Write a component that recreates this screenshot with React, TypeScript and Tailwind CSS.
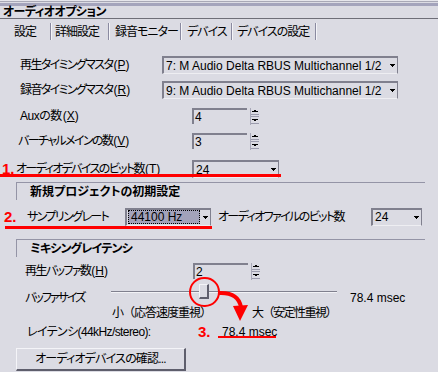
import React from "react";

const DARK = "border-[#80808e]";
const TIGHT = "tracking-[-1.6px]";

function DropArrow() {
  return (
    <svg width="5" height="3" viewBox="0 0 5 3" className="shrink-0">
      <rect x="0" y="0" width="5" height="1" fill="#000" />
      <rect x="1" y="1" width="3" height="1" fill="#000" />
      <rect x="2" y="2" width="1" height="1" fill="#000" />
    </svg>
  );
}

function Spin() {
  return (
    <svg width="10" height="17" viewBox="0 0 10 17" className="shrink-0">
      <rect x="0" y="0" width="1" height="17" fill="#a8a8b8" />
      <rect x="4" y="2" width="2" height="1" fill="#000" />
      <rect x="2" y="3" width="6" height="1" fill="#000" />
      <rect x="1" y="6" width="8" height="1" fill="#9c9cae" />
      <rect x="1" y="8" width="8" height="1" fill="#9c9cae" />
      <rect x="2" y="11" width="6" height="1" fill="#000" />
      <rect x="4" y="12" width="2" height="1" fill="#000" />
      <rect x="1" y="15" width="8" height="1" fill="#9c9cae" />
    </svg>
  );
}

// accelerator key like (P) with the letter underlined
function Key({ k }: { k: string }) {
  return (
    <span className="ml-[1px] tracking-normal">
      (<u>{k}</u>)
    </span>
  );
}

function Select({ w, value, selected }: { w: number; value: string; selected?: boolean }) {
  return (
    <div
      className={`flex h-[18px] shrink-0 items-center border-t-2 border-l-2 border-r ${DARK} border-b border-b-[#eeeef2]`}
      style={{ width: w }}
    >
      {selected ? (
        <div className="ml-[1px] flex h-[14px] flex-1 items-center border border-dotted border-black bg-[#a2a2ba] pl-[2px] text-[12px] leading-[14px]">
          {value}
        </div>
      ) : (
        <div className="flex-1 whitespace-nowrap pl-[2px] text-[12px] leading-[14px]">{value}</div>
      )}
      <div className="flex w-[10px] justify-center">
        <DropArrow />
      </div>
    </div>
  );
}

function NumInput({ value }: { value: string }) {
  return (
    <div className="flex items-center">
      <div className={`h-[16px] w-[55px] border-t-2 border-l-2 ${DARK} pl-[1px] text-[12px] leading-[14px]`}>
        {value}
      </div>
      <div className="ml-[3px]">
        <Spin />
      </div>
    </div>
  );
}

function GroupHeader({ title, tracking }: { title: string; tracking: string }) {
  return (
    <div
      className={`ml-[16px] flex h-[18px] w-[409px] items-center border-t border-l border-[#9494a6] pl-[13px] text-[12px] font-bold leading-[14px] ${tracking}`}
    >
      {title}
    </div>
  );
}

function Tab({ w, pl, label }: { w: number; pl: number; label: string }) {
  return (
    <>
      <span className="shrink-0 whitespace-nowrap tracking-[-1px]" style={{ width: w, paddingLeft: pl }}>
        {label}
      </span>
      <span className="h-[17px] w-[2px] shrink-0 border-l border-r border-l-[#8a8aa0] border-r-[#f4f4f8]" />
    </>
  );
}

export default function App() {
  const red =
    "text-[#ff0000] font-bold text-[15px] leading-[14px] tracking-normal font-['Liberation_Sans',sans-serif]";

  return (
    <div className="relative h-[372px] w-[438px] overflow-hidden whitespace-nowrap bg-[#dbdbe3] text-black font-['Liberation_Sans','Noto_Sans_CJK_JP',sans-serif] [font-feature-settings:'palt']">
      {/* window chrome */}
      <div className="h-[1px] bg-[#e6e6ec]" />
      <div className="h-[1px] bg-[#a8a8b6]" />
      <div className="h-[1px] bg-[#dcdce4]" />
      <div className="h-[3px] bg-[#a4a4bc]" />
      <div className="h-[13px] border-b border-[#6e6e78] pl-[3px] text-[12px] font-bold leading-[12px] tracking-[-0.6px]">
        オーディオオプション
      </div>

      {/* tabs */}
      <div className="flex h-[25px] items-center text-[12px] leading-[14px]">
        <Tab w={50} pl={14} label="設定" />
        <Tab w={56} pl={3} label="詳細設定" />
        <Tab w={70} pl={5} label="録音モニター" />
        <Tab w={49} pl={5} label="デバイス" />
        <Tab w={82} pl={4} label="デバイスの設定" />
      </div>

      {/* device rows */}
      <div className="mt-[12px] flex h-[18px] items-center text-[12px] leading-[14px]">
        <div className={`w-[162px] shrink-0 pl-[20px] ${TIGHT}`}>
          再生タイミングマスタ<Key k="P" />
        </div>
        <Select w={236} value="7: M Audio Delta RBUS Multichannel 1/2" />
      </div>
      <div className="mt-[7px] flex h-[18px] items-center text-[12px] leading-[14px]">
        <div className={`w-[162px] shrink-0 pl-[20px] ${TIGHT}`}>
          録音タイミングマスタ<Key k="R" />
        </div>
        <Select w={236} value="9: M Audio Delta RBUS Multichannel 1/2" />
      </div>
      <div className="mt-[9px] flex h-[16px] items-center text-[12px] leading-[14px]">
        <div className="w-[192px] shrink-0 pl-[20px] tracking-[-0.5px]">
          Auxの数<Key k="X" />
        </div>
        <NumInput value="4" />
      </div>
      <div className="mt-[9px] flex h-[16px] items-center text-[12px] leading-[14px]">
        <div className={`w-[192px] shrink-0 pl-[18px] ${TIGHT}`}>
          バーチャルメインの数<Key k="V" />
        </div>
        <NumInput value="3" />
      </div>
      <div className="mt-[11px] flex h-[18px] items-center text-[12px] leading-[14px]">
        <div className="flex w-[192px] shrink-0 items-center">
          <span className={`w-[16px] pl-[2px] ${red}`}>1.</span>
          <span className={TIGHT}>
            オーディオデバイスのビット数<Key k="T" />
          </span>
        </div>
        <Select w={87} value="24" />
      </div>

      {/* new project defaults */}
      <div className="mt-[4px]">
        <GroupHeader title="新規プロジェクトの初期設定" tracking="tracking-normal" />
      </div>
      <div className="mt-[7px] flex h-[19px] items-center text-[12px] leading-[14px]">
        <span className={`w-[27px] shrink-0 pl-[4px] ${red}`}>2.</span>
        <span className={`w-[98px] shrink-0 ${TIGHT}`}>サンプリングレート</span>
        <Select w={86} value="44100 Hz" selected />
        <span className={`w-[160px] shrink-0 pl-[7px] ${TIGHT}`}>オーディオファイルのビット数</span>
        <Select w={51} value="24" />
      </div>

      {/* mixing latency */}
      <div className="mt-[13px]">
        <GroupHeader title="ミキシングレイテンシ" tracking="tracking-[-0.8px]" />
      </div>
      <div className="mt-[6px] flex h-[16px] items-center text-[12px] leading-[14px]">
        <div className={`w-[193px] shrink-0 pl-[25px] ${TIGHT}`}>
          再生バッファ数<Key k="H" />
        </div>
        <NumInput value="2" />
      </div>
      <div className="mt-[2px] flex h-[24px] text-[12px] leading-[14px]">
        <div className="w-[111px] shrink-0 pl-[25px] pt-[10px] tracking-[-2px]">バッファサイズ</div>
        <div className="relative h-full w-[226px] shrink-0">
          <div className="mt-[10px] h-[2px] border-t border-b border-t-[#80808e] border-b-[#f2f2f6]" />
          <div className="absolute left-[88px] top-[3px] h-[15px] w-[10px] border-t border-l border-r-2 border-b-2 border-t-[#f4f4f8] border-l-[#f4f4f8] border-r-[#5e5e6c] border-b-[#5e5e6c] bg-[#dbdbe3]" />
        </div>
        <div className="pl-[13px] pt-[10px]">78.4 msec</div>
      </div>
      <div className="mt-[1px] flex h-[14px] items-center text-[12px] leading-[14px] [font-feature-settings:normal]">
        <span className="w-[252px] shrink-0 pl-[112px] tracking-[-1px]">小（応答速度重視）</span>
        <span className="tracking-[-1.5px]">大（安定性重視）</span>
      </div>
      <div className="mt-[5px] flex h-[14px] items-center text-[12px] leading-[14px]">
        <span className="w-[198px] shrink-0 pl-[27px] tracking-[-0.6px]">レイテンシ(44kHz/stereo):</span>
        <span className={`w-[24px] shrink-0 ${red}`}>3.</span>
        <span>78.4 msec</span>
      </div>

      <div className="ml-[16px] mt-[9px] flex h-[23px] w-[170px] items-center justify-center border-t border-l border-t-[#f4f4f8] border-l-[#f4f4f8] border-r-2 border-b-2 border-r-[#5e5e6c] border-b-[#5e5e6c] text-[12px] leading-[14px] tracking-[-0.8px]">
        オーディオデバイスの確認...
      </div>

      {/* red annotations */}
      <div className="absolute left-0 top-[174px] h-[3px] w-[281px] bg-[#ff0000]" />
      <div className="absolute left-[5px] top-[226px] h-[3px] w-[207px] bg-[#ff0000]" />
      <div className="absolute left-[218px] top-[336px] h-[2px] w-[58px] bg-[#ff0000]" />
      <div className="absolute left-[189px] top-[277px] h-[30px] w-[31px] rounded-full border-2 border-[#ff0000]" />
      <svg className="absolute left-[214px] top-[286px]" width="40" height="40" viewBox="0 0 40 40">
        <path d="M5 7 Q24 6 27 21" fill="none" stroke="#ff0000" strokeWidth="4" />
        <polygon points="19,20 34,19 26,35" fill="#ff0000" />
      </svg>
    </div>
  );
}
